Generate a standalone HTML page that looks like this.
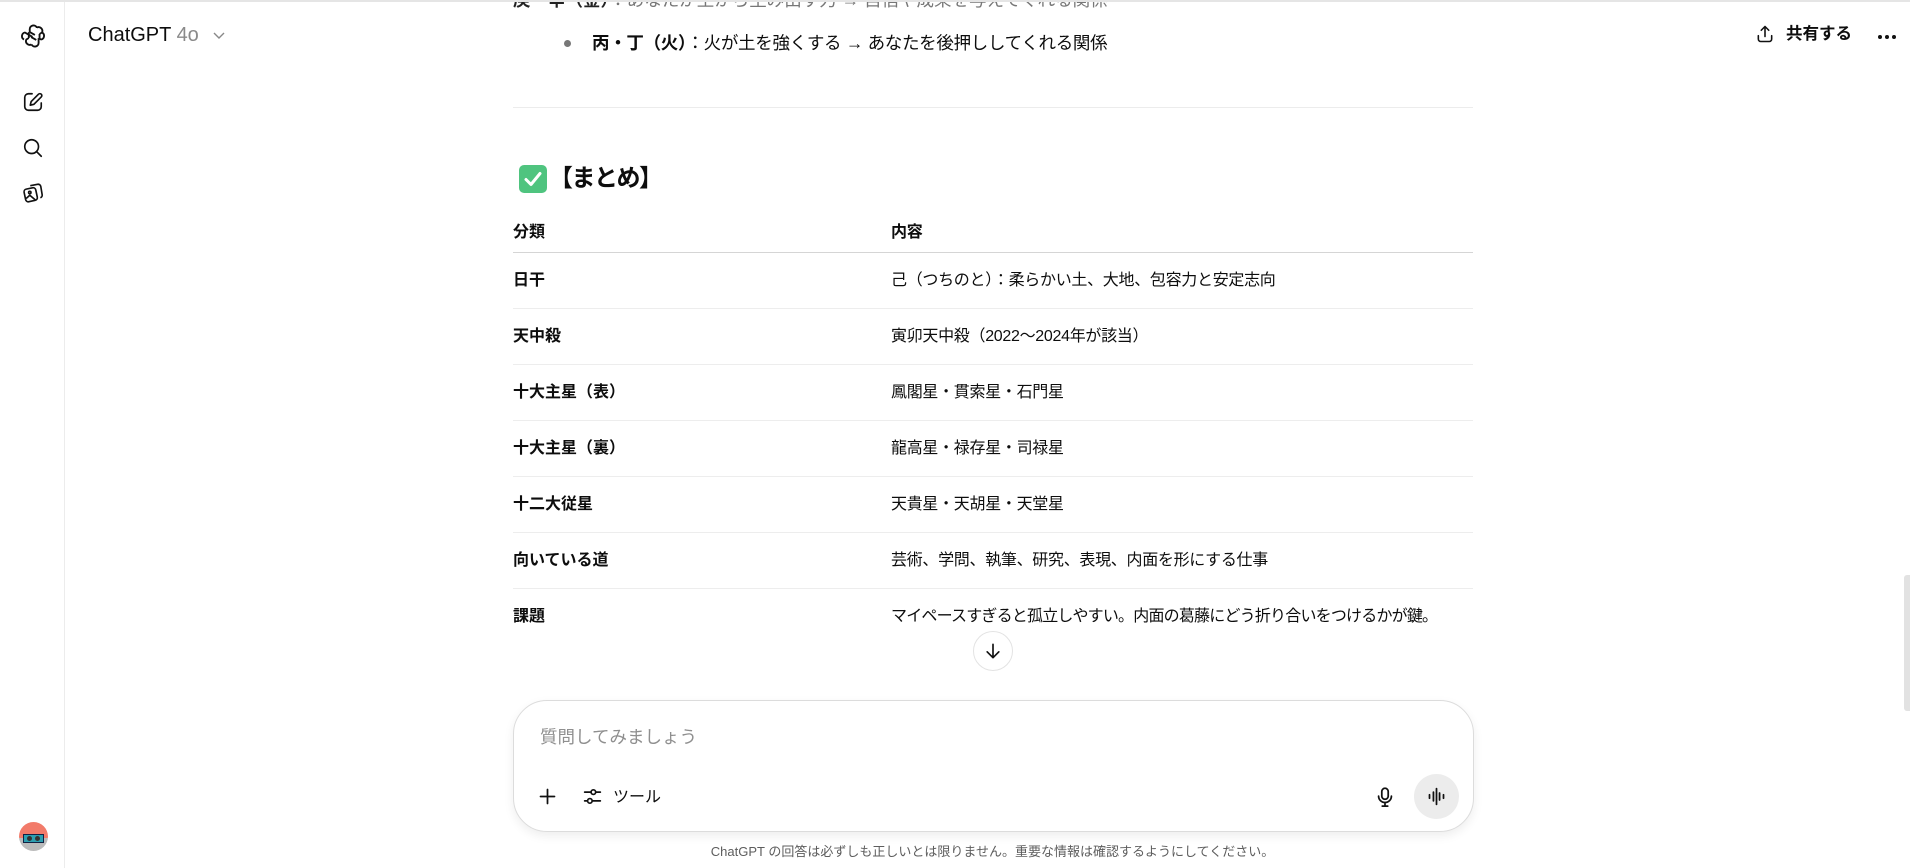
<!DOCTYPE html>
<html><head><meta charset="utf-8"><style>
*{margin:0;padding:0;box-sizing:border-box}
html,body{width:1910px;height:868px;overflow:hidden;background:#fff;font-family:"Liberation Sans","Noto Sans CJK JP",sans-serif;color:#0d0d0d}
.topline{position:absolute;left:0;top:0;width:1910px;height:2px;background:#e5e5e5}
.side{position:absolute;left:0;top:2px;width:65px;height:866px;border-right:1px solid #ececec;background:#fff}
.ic{position:absolute}
.abs{position:absolute;white-space:nowrap}
.row{position:absolute;left:513px;width:960px;height:56px;border-bottom:1px solid #ededed;font-size:16px;white-space:nowrap}
.row .a{position:absolute;left:0;top:0;line-height:56px;font-weight:bold}
.row .b{position:absolute;left:378px;top:0;line-height:56px;letter-spacing:-0.3px}
</style></head><body>
<div class="topline"></div>
<div class="side">
<svg class="ic" style="left:19px;top:20px" width="28" height="28" viewBox="0 0 24 24" fill="none" stroke="#111" stroke-width="1.6" stroke-linejoin="round"><path d="M9.2 8.6V6.2a3.2 3.2 0 0 1 6.1-1.4l0 0 M9.2 8.6l4.4 2.5M15.3 4.8a3.2 3.2 0 0 1 4.4 4.2L17.6 10.3M17.6 10.3v5M19.7 9a3.2 3.2 0 0 1-0.8 6l-2.1-1.2M14.8 15.4l-4.4-2.5M16.8 13.8V17.8a3.2 3.2 0 0 1-6.1 1.4M10.7 19.2a3.2 3.2 0 0 1-4.4-4.2l2.1-1.3M8.4 13.7V8.7M4.3 15a3.2 3.2 0 0 1 0.8-6l2.1 1.2M7.2 10.2l4.4 2.6"/></svg>
<svg class="ic" style="left:22px;top:89px" width="22" height="22" viewBox="0 0 24 24" fill="none" stroke="#111" stroke-width="1.8" stroke-linecap="round" stroke-linejoin="round"><path d="M11 3H7a4 4 0 0 0-4 4v10a4 4 0 0 0 4 4h10a4 4 0 0 0 4-4v-4"/><path d="M18 3.5a2.1 2.1 0 0 1 3 3L13 14.5l-4 1 1-4z"/></svg>
<svg class="ic" style="left:22px;top:135px" width="22" height="22" viewBox="0 0 24 24" fill="none" stroke="#111" stroke-width="1.8" stroke-linecap="round"><circle cx="10.5" cy="10.5" r="7.5"/><path d="M16 16l5 5"/></svg>
<svg class="ic" style="left:22px;top:180px" width="22" height="22" viewBox="0 0 24 24" fill="none" stroke="#111" stroke-width="1.8" stroke-linejoin="round"><rect x="3" y="7" width="13" height="14" rx="3" transform="rotate(-12 9 14)"/><path d="M9 4l8-1.5a3 3 0 0 1 3.5 2.4l1.5 9a3 3 0 0 1-2 3.3"/><circle cx="8.5" cy="11.5" r="1.3"/><path d="M4.5 18l4-3.5 6 5"/></svg>
<div class="ic" style="left:19px;top:820px;width:29px;height:29px;border-radius:50%;background:linear-gradient(#f27b6a 0 55%,#bbb 55%);overflow:hidden"><div style="position:absolute;left:4px;top:12px;width:21px;height:9px;background:#2d9fb0;border:1px solid #124"></div><div style="position:absolute;left:8px;top:14px;width:5px;height:5px;border-radius:50%;background:#333"></div><div style="position:absolute;left:16px;top:14px;width:5px;height:5px;border-radius:50%;background:#333"></div></div>
</div>

<div class="abs" style="left:88px;top:22px;font-size:20px;line-height:26px;color:#0d0d0d">ChatGPT <span style="color:#8a8a8a">4o</span></div>
<svg class="ic" style="left:212px;top:30px" width="14" height="12" viewBox="0 0 14 12" fill="none" stroke="#888" stroke-width="1.4"><path d="M2 3l5 5 5-5"/></svg>

<svg class="ic" style="left:1755px;top:24px" width="20" height="20" viewBox="0 0 24 24" fill="none" stroke="#111" stroke-width="1.9" stroke-linecap="round" stroke-linejoin="round"><path d="M12 15V3M7.5 7.5L12 3l4.5 4.5M4 14v4a3 3 0 0 0 3 3h10a3 3 0 0 0 3-3v-4"/></svg>
<div class="abs" style="left:1786px;top:22px;font-size:16.5px;line-height:24px;font-weight:bold">共有する</div>
<div class="abs" style="left:1878px;top:35px;width:4px;height:4px;border-radius:2px;background:#111"></div>
<div class="abs" style="left:1885px;top:35px;width:4px;height:4px;border-radius:2px;background:#111"></div>
<div class="abs" style="left:1892px;top:35px;width:4px;height:4px;border-radius:2px;background:#111"></div>

<div class="abs" style="left:513px;top:-10px;font-size:17.5px;line-height:20px;color:#777;clip-path:inset(12px 0 0 0)"><b style="color:#222">庚・辛（金）</b>：あなたが土から生み出す力 → 自信や成果を与えてくれる関係</div>
<div class="abs" style="left:564px;top:40px;width:7px;height:7px;border-radius:50%;background:#777"></div>
<div class="abs" style="left:592px;top:29px;font-size:17.5px;line-height:28px;letter-spacing:-0.3px"><b>丙・丁（火）</b>：火が土を強くする → あなたを後押ししてくれる関係</div>
<div class="abs" style="left:513px;top:107px;width:960px;height:1px;background:#ececec"></div>

<div class="abs" style="left:519px;top:165px;width:28px;height:28px;border-radius:5px;background:#4fc47f"><svg width="28" height="28" viewBox="0 0 28 28"><path d="M7 14.5l5 5 9-11" fill="none" stroke="#fff" stroke-width="3" stroke-linecap="round" stroke-linejoin="round"/></svg></div>
<div class="abs" style="left:549px;top:162px;font-size:24px;line-height:34px;font-weight:bold;letter-spacing:-1.5px">【まとめ】</div>

<div class="row" style="top:205px;height:48px;border-bottom:1px solid #d5d5d5"><div class="a" style="line-height:56px">分類</div><div class="b" style="line-height:56px;font-weight:bold">内容</div></div>
<div class="row" style="top:253px"><div class="a">日干</div><div class="b">己（つちのと）：柔らかい土、大地、包容力と安定志向</div></div>
<div class="row" style="top:309px"><div class="a">天中殺</div><div class="b">寅卯天中殺（2022〜2024年が該当）</div></div>
<div class="row" style="top:365px"><div class="a">十大主星（表）</div><div class="b">鳳閣星・貫索星・石門星</div></div>
<div class="row" style="top:421px"><div class="a">十大主星（裏）</div><div class="b">龍高星・禄存星・司禄星</div></div>
<div class="row" style="top:477px"><div class="a">十二大従星</div><div class="b">天貴星・天胡星・天堂星</div></div>
<div class="row" style="top:533px"><div class="a">向いている道</div><div class="b">芸術、学問、執筆、研究、表現、内面を形にする仕事</div></div>
<div class="row" style="top:589px;border-bottom:none"><div class="a">課題</div><div class="b" style="letter-spacing:-0.8px">マイペースすぎると孤立しやすい。内面の葛藤にどう折り合いをつけるかが鍵。</div></div>

<div class="abs" style="left:973px;top:631px;width:40px;height:40px;border-radius:50%;background:#fff;border:1px solid #e3e3e3"><svg style="position:absolute;left:9px;top:9px" width="20" height="20" viewBox="0 0 24 24" fill="none" stroke="#111" stroke-width="2" stroke-linecap="round" stroke-linejoin="round"><path d="M12 4v16M5 13l7 7 7-7"/></svg></div>

<div class="abs" style="left:513px;top:700px;width:961px;height:132px;border-radius:34px;border:1px solid #dcdcdc;box-shadow:0 4px 10px rgba(0,0,0,0.07);background:#fff"></div>
<div class="abs" style="left:540px;top:724px;font-size:17.5px;line-height:26px;color:#8f8f8f">質問してみましょう</div>
<svg class="ic" style="left:537px;top:786px" width="21" height="21" viewBox="0 0 24 24" fill="none" stroke="#111" stroke-width="2" stroke-linecap="round"><path d="M12 4v16M4 12h16"/></svg>
<svg class="ic" style="left:582px;top:786px" width="21" height="21" viewBox="0 0 24 24" fill="none" stroke="#111" stroke-width="1.9" stroke-linecap="round"><path d="M3 7h7M16 7h5M3 17h3M12 17h9"/><circle cx="13" cy="7" r="2.6"/><circle cx="9" cy="17" r="2.6"/></svg>
<div class="abs" style="left:613px;top:786px;font-size:16px;line-height:24px">ツール</div>
<svg class="ic" style="left:1374px;top:785px" width="22" height="24" viewBox="0 0 24 24" fill="none" stroke="#111" stroke-width="1.9" stroke-linecap="round"><rect x="8.5" y="2.5" width="7" height="12" rx="3.5"/><path d="M5 11a7 7 0 0 0 14 0M12 18v4M9 22h6"/></svg>
<div class="abs" style="left:1414px;top:774px;width:45px;height:45px;border-radius:50%;background:#ececec"><svg style="position:absolute;left:12px;top:12px" width="21" height="21" viewBox="0 0 24 24" fill="none" stroke="#111" stroke-width="2" stroke-linecap="round"><path d="M4 10v4M8.5 7v10M12 3v18M15.5 8v8M20 10v4"/></svg></div>

<div class="abs" style="left:0;width:1985px;text-align:center;top:843px;font-size:13px;line-height:18px;color:#5d5d5d">ChatGPT の回答は必ずしも正しいとは限りません。重要な情報は確認するようにしてください。</div>

<div class="abs" style="left:1904px;top:575px;width:6px;height:136px;background:#e2e2e2;border-radius:3px 0 0 3px"></div>
</body></html>
